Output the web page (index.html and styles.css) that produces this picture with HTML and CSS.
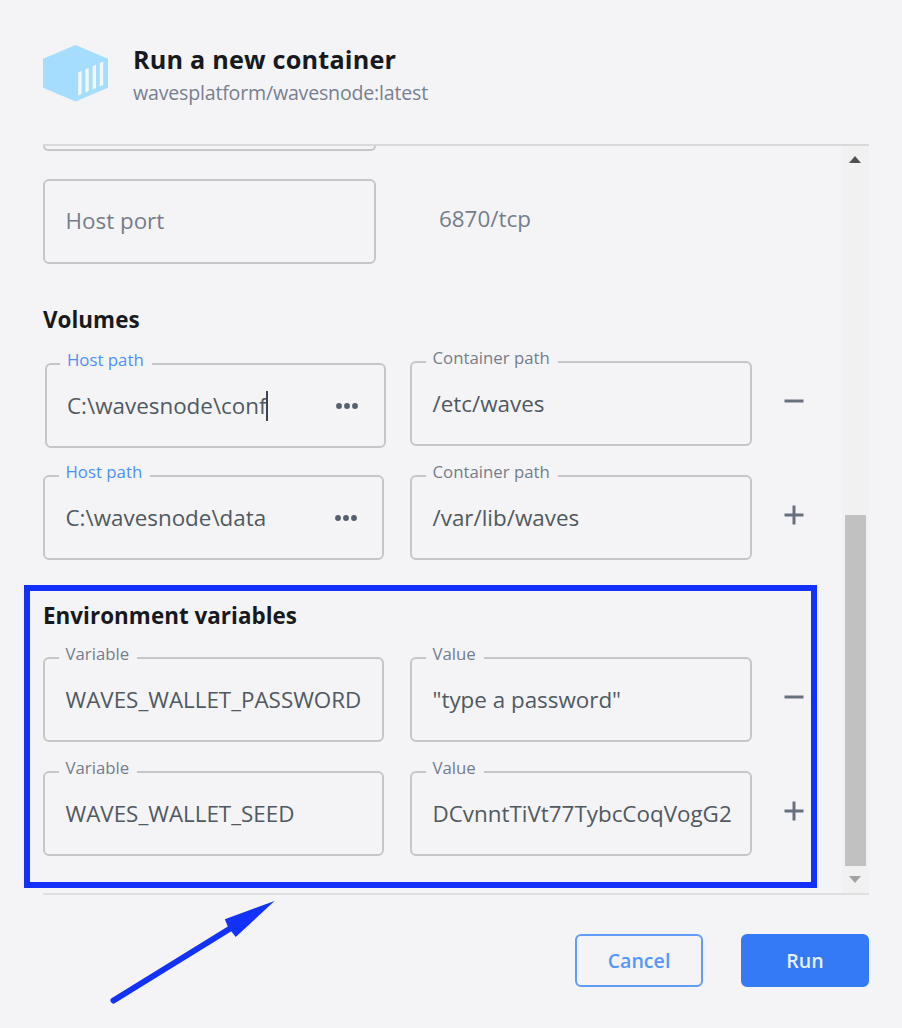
FILE: index.html
```html
<!DOCTYPE html>
<html lang="en">
<head>
<meta charset="utf-8">
<title>Run a new container</title>
<link rel="stylesheet" href="styles.css">
</head>
<body>
<main class="dialog">
  <header class="header">
    <svg class="logo" width="66" height="58" viewBox="0 0 66 58">
      <path d="M32.5 1 65 14.8V43.7L32.5 57.5 0 43.7V14.8Z" fill="#a5ddff"/>
      <path d="M35.2 28.4 38.6 27V50L35.2 51.4ZM42.4 25.3 45.8 23.9V47L42.4 48.4ZM49.6 22.2 53 20.8V44L49.6 45.4ZM56.8 19.1 60.2 17.7V41L56.8 42.4Z" fill="#f4f6f7"/>
    </svg>
    <div class="heading">
      <h1 class="title">Run a new container</h1>
      <p class="subtitle">wavesplatform/wavesnode:latest</p>
    </div>
  </header>

  <section class="viewport">
    <div class="content">
      <div class="field field-cut"></div>
      <div class="port-row">
        <div class="field muted">Host port</div>
        <span class="port">6870/tcp</span>
      </div>

      <h2 class="section-title">Volumes</h2>
      <div class="row">
        <div class="field field-shifted"><span class="label active">Host path</span><span class="value">C:\wavesnode\conf</span><i class="caret"></i>
          <svg class="dots" width="24" height="8" viewBox="0 0 24 8"><circle cx="4" cy="4" r="2.9"/><circle cx="12" cy="4" r="2.9"/><circle cx="20" cy="4" r="2.9"/></svg></div>
        <div class="field"><span class="label">Container path</span><span class="value">/etc/waves</span></div>
        <svg class="action" width="20" height="20" viewBox="0 0 20 20"><path d="M.5 10h19"/></svg>
      </div>
      <div class="row">
        <div class="field"><span class="label active">Host path</span><span class="value">C:\wavesnode\data</span>
          <svg class="dots" width="24" height="8" viewBox="0 0 24 8"><circle cx="4" cy="4" r="2.9"/><circle cx="12" cy="4" r="2.9"/><circle cx="20" cy="4" r="2.9"/></svg></div>
        <div class="field"><span class="label">Container path</span><span class="value">/var/lib/waves</span></div>
        <svg class="action" width="20" height="20" viewBox="0 0 20 20"><path d="M.5 10h19M10 .5v19"/></svg>
      </div>

      <h2 class="section-title">Environment variables</h2>
      <div class="row">
        <div class="field"><span class="label">Variable</span><span class="value">WAVES_WALLET_PASSWORD</span></div>
        <div class="field"><span class="label">Value</span><span class="value">"type a password"</span></div>
        <svg class="action" width="20" height="20" viewBox="0 0 20 20"><path d="M.5 10h19"/></svg>
      </div>
      <div class="row">
        <div class="field"><span class="label">Variable</span><span class="value">WAVES_WALLET_SEED</span></div>
        <div class="field"><span class="label">Value</span><span class="value">DCvnntTiVt77TybcCoqVogG2</span></div>
        <svg class="action" width="20" height="20" viewBox="0 0 20 20"><path d="M.5 10h19M10 .5v19"/></svg>
      </div>
    </div>
    <div class="scrollbar">
      <svg width="13" height="7" viewBox="0 0 13 7"><path d="M6 0 12 7H0Z" fill="#505050"/></svg>
      <div class="thumb"></div>
      <svg width="13" height="7" viewBox="0 0 13 7"><path d="M0 0H12L6 7Z" fill="#a3a3a3"/></svg>
    </div>
  </section>

  <footer class="footer">
    <button class="button cancel">Cancel</button>
    <button class="button run">Run</button>
  </footer>

  <div class="highlight"></div>
  <svg class="arrow" width="170" height="108" viewBox="0 0 170 108">
    <path d="M8.5 102.5 126 30" stroke="#1231fa" stroke-width="6" stroke-linecap="round"/>
    <path d="M169.5 3 119.8 21.3 123 29 130.7 39Z" fill="#1231fa"/>
  </svg>
</main>
</body>
</html>
```
FILE: styles.css
```css
* { box-sizing: border-box; }

body {
  margin: 0;
  background: #f4f4f6;
  font-family: "Open Sans", "Noto Sans", sans-serif;
  color: #17191e;
}

.dialog {
  position: relative;
  width: 902px;
  height: 1028px;
  padding: 0 33px 0 43px;
  display: flex;
  flex-direction: column;
  overflow: hidden;
}

.header {
  height: 144px;
  flex: none;
  display: flex;
  align-items: flex-start;
  gap: 24px;
  padding-top: 44px;
}

.heading { margin-top: -1px; }

.title {
  margin: 0;
  font-size: 25.2px;
  line-height: 32px;
  font-weight: 700;
  letter-spacing: 0.2px;
}

.subtitle {
  margin: 4px 0 0;
  font-size: 19.6px;
  line-height: 28px;
  letter-spacing: -0.2px;
  color: #777f90;
}

.viewport {
  height: 751px;
  flex: none;
  display: flex;
  border-top: 2px solid #d9d9dc;
  border-bottom: 2px solid #dfdfe1;
}

.content { width: 799px; }

.field {
  position: relative;
  display: flex;
  align-items: center;
  height: 85px;
  padding: 0 24px 0 20.5px;
  border: 2px solid #c5c6c8;
  border-radius: 6px;
  font-size: 22.4px;
  line-height: 30px;
  color: #505961;
  white-space: nowrap;
}

.field-cut {
  width: 333px;
  height: 5px;
  border-top: 0;
  border-radius: 0 0 6px 6px;
}

.port-row {
  display: grid;
  grid-template-columns: 333px auto;
  column-gap: 63px;
  margin-top: 28px;
}

.field.muted, .port { color: #757d8b; }

.field.muted { padding-bottom: 2px; }

.port {
  padding-top: 25px;
  font-size: 22.4px;
  line-height: 30px;
}

.section-title {
  margin: 40px 0 0;
  height: 31px;
  font-size: 22.4px;
  line-height: 32px;
  font-weight: 700;
  letter-spacing: 0.04px;
}

.row {
  display: grid;
  grid-template-columns: 367px 342px 83px;
  align-items: start;
  margin-top: 26px;
}

.row + .row { margin-top: 29px; }
.row .field:first-child { width: 341px; }

.field.field-shifted {
  margin: 2px 0 -2px 1.5px;
  padding-right: 25px;
}

.label {
  position: absolute;
  top: -16px;
  left: 13.5px;
  padding: 0 8px 0 7px;
  background: #f4f4f6;
  font-size: 16.8px;
  line-height: 22px;
  color: #757d8d;
}

.label.active { color: #4c91fb; }

.caret {
  width: 2px;
  height: 30px;
  margin-left: -1px;
  background: #3d4650;
}

.dots {
  margin-left: auto;
  fill: #565f70;
}

.action {
  justify-self: center;
  margin-top: 29.5px;
  stroke: #687080;
  stroke-width: 3;
}

.scrollbar {
  width: 27px;
  display: flex;
  flex-direction: column;
  align-items: center;
  justify-content: space-between;
  padding: 10px 0;
  background: #f1f1f1;
}

.thumb {
  width: 21px;
  height: 351px;
  margin: auto 0 10px;
  background: #c1c1c1;
}

.footer {
  display: flex;
  justify-content: flex-end;
  gap: 38px;
  padding-top: 39px;
}

.button {
  width: 128px;
  height: 53px;
  padding: 0;
  border: 2px solid #347af6;
  border-radius: 6px;
  font: 600 19.6px/28px "Open Sans", "Noto Sans", sans-serif;
}

.cancel {
  border-color: #609dfb;
  background: transparent;
  color: #5797fb;
}

.run {
  background: #347af6;
  color: #e8f1ff;
}

.highlight {
  position: absolute;
  left: 23.5px;
  top: 585px;
  width: 793.5px;
  height: 303px;
  border: 6px solid #1231fa;
}

.arrow {
  position: absolute;
  left: 105px;
  top: 898px;
  fill: none;
}
```
